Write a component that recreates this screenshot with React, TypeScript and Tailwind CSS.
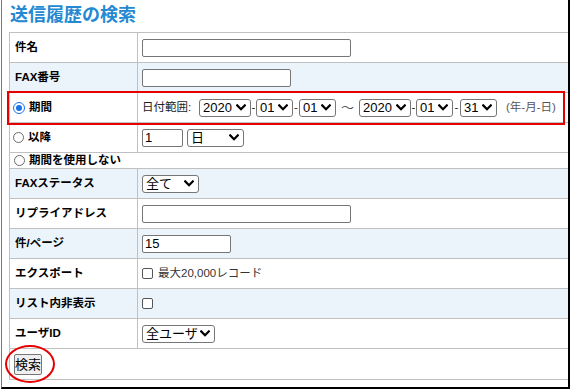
import React from "react";

const FONT = '"Liberation Sans", "Noto Sans CJK JP", sans-serif';

function Chevron() {
  return (
    <svg width="10" height="7" viewBox="0 0 10 7" className="shrink-0">
      <path d="M1.2 1.4 L5 5.2 L8.8 1.4" fill="none" stroke="#000" strokeWidth="2.2" strokeLinecap="square" />
    </svg>
  );
}

function Sel({ className, children }: { className: string; children: React.ReactNode }) {
  return (
    <span
      className={
        "inline-flex h-[18px] items-center justify-between rounded-[3px] border border-[#767676] bg-white pl-[3px] pr-[4px] text-[13px] leading-none text-black " +
        className
      }
    >
      <span>{children}</span>
      <Chevron />
    </span>
  );
}

function TextBox({ className, value }: { className: string; value?: string }) {
  return (
    <span
      className={
        "inline-flex h-[18px] items-center rounded-[2px] border border-[#767676] bg-white px-[2px] text-[13px] leading-none text-black " +
        className
      }
    >
      {value ?? ""}
    </span>
  );
}

function Radio({ checked }: { checked?: boolean }) {
  if (checked) {
    return (
      <span className="flex h-[12px] w-[12px] shrink-0 items-center justify-center rounded-full border-[1.5px] border-[#1a73e8] bg-white">
        <span className="h-[6px] w-[6px] rounded-full bg-[#1a73e8]" />
      </span>
    );
  }
  return <span className="h-[11px] w-[11px] shrink-0 rounded-full border border-[#6b6b6b] bg-white" />;
}

function Check() {
  return <span className="h-[11px] w-[11px] shrink-0 rounded-[2px] border border-[#555] bg-white" />;
}

function Row({
  label,
  blue,
  children,
  radio,
}: {
  label: React.ReactNode;
  blue?: boolean;
  children?: React.ReactNode;
  radio?: "on" | "off";
}) {
  return (
    <div className={"flex h-[30px] border-b border-[#c0c0c0] " + (blue ? "bg-[#ebf3fb]" : "bg-white")}>
      <div
        className={
          "flex w-[128px] shrink-0 items-center border-r border-[#c0c0c0] text-[11.5px] font-bold leading-none text-black " +
          (radio ? "gap-[4px] pl-[3px]" : "pl-[5px]")
        }
      >
        {radio && <Radio checked={radio === "on"} />}
        <span>{label}</span>
      </div>
      <div className="flex flex-1 items-center pl-[4px]">{children}</div>
    </div>
  );
}

export default function App() {
  return (
    <div className="h-[389px] w-[570px] bg-white" style={{ fontFamily: FONT }}>
      <div className="relative ml-px h-full w-[569px] border-b-2 border-l border-r-2 border-b-black border-l-[#777] border-r-black">
        <div className="h-[32px] pl-[8px] pt-[3px] text-[18px] font-bold leading-[24px] text-[#2589d2]">
          送信履歴の検索
        </div>
        <div className="ml-[7px] border-l border-t border-[#c0c0c0]">
          <Row label="件名">
            <TextBox className="w-[209px]" />
          </Row>
          <Row label="FAX番号" blue>
            <TextBox className="w-[149px]" />
          </Row>
          <Row label="期間" radio="on">
            <div className="flex items-center text-[11.5px] leading-none text-[#222]">
              <span className="w-[57px]">日付範囲:</span>
              <Sel className="w-[52px]">2020</Sel>
              <span className="w-[5px] text-center">-</span>
              <Sel className="w-[37px]">01</Sel>
              <span className="w-[6px] text-center">-</span>
              <Sel className="w-[37px]">01</Sel>
              <span className="w-[23px] text-center text-[13px] text-[#555]">～</span>
              <Sel className="w-[52px]">2020</Sel>
              <span className="w-[5px] text-center">-</span>
              <Sel className="w-[37px]">01</Sel>
              <span className="w-[7px] text-center">-</span>
              <Sel className="w-[37px]">31</Sel>
              <span className="ml-[9px] text-[#555]">(年-月-日)</span>
            </div>
          </Row>
          <Row label="以降" radio="off">
            <div className="flex items-center gap-[4px]">
              <TextBox className="w-[41px]" value="1" />
              <Sel className="w-[57px]">日</Sel>
            </div>
          </Row>
          <div className="flex h-[16px] items-center gap-[4px] border-b border-[#c0c0c0] pl-[4px] text-[11.5px] font-bold leading-none text-black">
            <Radio />
            <span>期間を使用しない</span>
          </div>
          <Row label="FAXステータス" blue>
            <Sel className="w-[57px]">全て</Sel>
          </Row>
          <Row label="リプライアドレス">
            <TextBox className="w-[209px]" />
          </Row>
          <Row label="件/ページ" blue>
            <TextBox className="w-[89px]" value="15" />
          </Row>
          <Row label="エクスポート">
            <div className="flex items-center gap-[5px] text-[11.5px] leading-none text-[#333]">
              <Check />
              <span>最大20,000レコード</span>
            </div>
          </Row>
          <Row label="リスト内非表示" blue>
            <Check />
          </Row>
          <Row label="ユーザID">
            <Sel className="w-[73px]">全ユーザ</Sel>
          </Row>
          <div className="flex h-[31px] items-center border-b border-[#c0c0c0] pl-[4px]">
            <button className="h-[21px] w-[28px] rounded-[2px] border border-[#767676] bg-[#efefef] text-[13px] leading-none text-black">
              検索
            </button>
          </div>
        </div>
        {/* annotation overlays */}
        <div className="pointer-events-none absolute left-[5px] top-[91px] h-[34px] w-[558px] border-2 border-[#e60000]" />
        <div className="pointer-events-none absolute left-[3px] top-[345px] h-[38px] w-[50px] rounded-[50%] border-2 border-[#e60000]" />
      </div>
    </div>
  );
}
